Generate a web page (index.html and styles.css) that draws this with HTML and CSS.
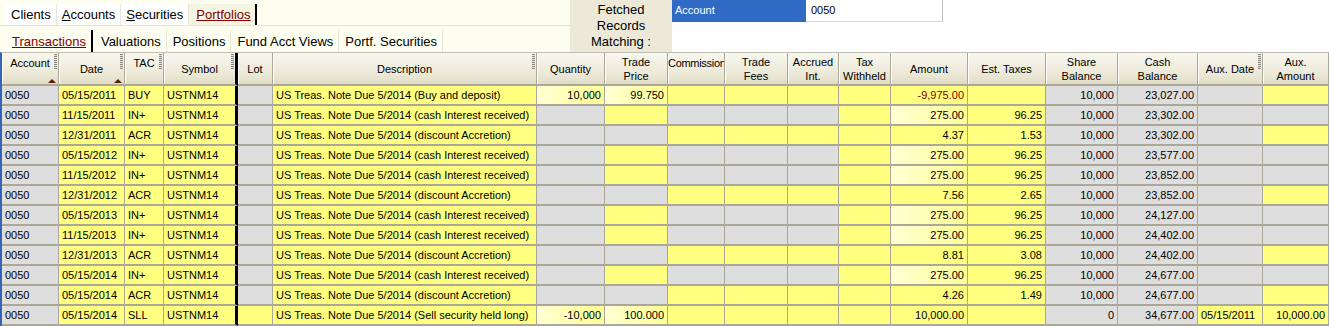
FILE: index.html
```
<!DOCTYPE html>
<html lang="en">

<head>
    <meta charset="UTF-8">
    <title>Portfolio Transactions</title>
    <link rel="stylesheet" href="styles.css">
</head>

<body>
    <div class="topbar">
        <div class="tab-panel">
            <div class="tab-row tab-row-main">
                <span class="tab">Clients</span>
                <span class="tab"><u>A</u>ccounts</span>
                <span class="tab"><u>S</u>ecurities</span>
                <span class="tab tab-active">Portfolios</span>
            </div>
            <div class="tab-row tab-row-sub">
                <span class="tab tab-active">Transactions</span>
                <span class="tab">Valuations</span>
                <span class="tab">Positions</span>
                <span class="tab">Fund Acct Views</span>
                <span class="tab">Portf. Securities</span>
            </div>
        </div>
        <div class="fetched">Fetched<br>Records<br>Matching :</div>
        <div class="filter">
            <div class="filter-row">
                <span class="filter-label">Account</span>
                <span class="filter-value">0050</span>
            </div>
        </div>
    </div>

    <div class="grid" id="grid">
        <div class="grid-row grid-head">
            <div class="hd hd-top">Account<span class="grip"></span><span class="sort"></span></div>
            <div class="hd">Date<span class="grip"></span><span class="sort"></span></div>
            <div class="hd hd-top">TAC<span class="grip"></span></div>
            <div class="hd hd-split">Symbol<span class="grip"></span></div>
            <div class="hd">Lot</div>
            <div class="hd">Description<span class="grip"></span></div>
            <div class="hd">Quantity</div>
            <div class="hd">Trade<br>Price</div>
            <div class="hd hd-top hd-left">Commission</div>
            <div class="hd">Trade<br>Fees</div>
            <div class="hd">Accrued<br>Int.</div>
            <div class="hd">Tax<br>Withheld</div>
            <div class="hd">Amount</div>
            <div class="hd">Est. Taxes</div>
            <div class="hd">Share<br>Balance</div>
            <div class="hd">Cash<br>Balance</div>
            <div class="hd">Aux. Date<span class="grip"></span></div>
            <div class="hd">Aux.<br>Amount</div>
        </div>
    </div>

    <script>
        // colour of lot, qty, price, comm, fees, accr, tax, amount, est, share, cash, aux date, aux amount
        const shades = {
            "BUY": "g ly ly y y y y y y g g g y",
            "IN+": "g g y g g g y ly y g g g g",
            "ACR": "g g g y y y y y y g g g y",
            "SLL": "y ly ly y y y y y y g g y y"
        };

        const rows = [
            ["05/15/2011", "BUY", "Buy and deposit", "10,000", "99.750", "-9,975.00", "", "10,000", "23,027.00", "", ""],
            ["11/15/2011", "IN+", "cash Interest received", "", "", "275.00", "96.25", "10,000", "23,302.00", "", ""],
            ["12/31/2011", "ACR", "discount Accretion", "", "", "4.37", "1.53", "10,000", "23,302.00", "", ""],
            ["05/15/2012", "IN+", "cash Interest received", "", "", "275.00", "96.25", "10,000", "23,577.00", "", ""],
            ["11/15/2012", "IN+", "cash Interest received", "", "", "275.00", "96.25", "10,000", "23,852.00", "", ""],
            ["12/31/2012", "ACR", "discount Accretion", "", "", "7.56", "2.65", "10,000", "23,852.00", "", ""],
            ["05/15/2013", "IN+", "cash Interest received", "", "", "275.00", "96.25", "10,000", "24,127.00", "", ""],
            ["11/15/2013", "IN+", "cash Interest received", "", "", "275.00", "96.25", "10,000", "24,402.00", "", ""],
            ["12/31/2013", "ACR", "discount Accretion", "", "", "8.81", "3.08", "10,000", "24,402.00", "", ""],
            ["05/15/2014", "IN+", "cash Interest received", "", "", "275.00", "96.25", "10,000", "24,677.00", "", ""],
            ["05/15/2014", "ACR", "discount Accretion", "", "", "4.26", "1.49", "10,000", "24,677.00", "", ""],
            ["05/15/2014", "SLL", "Sell security held long", "-10,000", "100.000", "10,000.00", "", "0", "34,677.00", "05/15/2011", "10,000.00"]
        ];

        const grid = document.getElementById("grid");

        function cell(row, text, cls) {
            const c = document.createElement("div");
            c.className = "cell " + cls;
            c.textContent = text;
            row.appendChild(c);
        }

        rows.forEach((r) => {
            const row = document.createElement("div");
            row.className = "grid-row";
            const s = shades[r[1]].split(" ");

            cell(row, "0050", "g");
            cell(row, r[0], "y");
            cell(row, r[1], "y");
            cell(row, "USTNM14", "y split");
            cell(row, "", s[0]);
            cell(row, "US Treas. Note Due 5/2014 (" + r[2] + ")", "y");
            cell(row, r[3], s[1] + " num");
            cell(row, r[4], s[2] + " num");
            cell(row, "", s[3]);
            cell(row, "", s[4]);
            cell(row, "", s[5]);
            cell(row, "", s[6]);
            cell(row, r[5], s[7] + " num" + (r[5].startsWith("-") ? " neg" : ""));
            cell(row, r[6], s[8] + " num");
            cell(row, r[7], s[9] + " num");
            cell(row, r[8], s[10] + " num");
            cell(row, r[9], s[11]);
            cell(row, r[10], s[12] + " num");

            grid.appendChild(row);
        });
    </script>
</body>

</html>
```

FILE: styles.css
```
* {
    box-sizing: border-box;
    margin: 0;
    padding: 0;
}

body {
    font-family: 'Liberation Sans', Arial, sans-serif;
    background-color: #ffffff;
    color: #000;
    width: 1329px;
    height: 327px;
    overflow: hidden;
}

/* top bar */
.topbar {
    display: flex;
    height: 52px;
}

.tab-panel {
    width: 570px;
    background-color: #fdfdf0;
    display: flex;
    flex-direction: column;
}

.tab-row {
    display: flex;
    align-items: stretch;
    font-size: 13px;
}

.tab-row-main {
    height: 26px;
    padding-top: 4px;
    padding-left: 6px;
    background-color: #fdfdf0;
    border-bottom: 1px solid #e6e4d2;
}

.tab-row-sub {
    height: 26px;
    padding-top: 4px;
    padding-left: 4px;
}

.tab {
    display: flex;
    align-items: center;
    padding: 0 5px;
    border-right: 1px solid #e8e6d6;
    background-color: #ffffff;
}

.tab-row-sub .tab {
    background-color: transparent;
    padding: 0 5px 0 6px;
}

.tab u {
    text-decoration: underline;
}

.tab-active {
    color: #800000;
    text-decoration: underline;
    border-right: 2px solid #000;
    background-color: #f6f4e2 !important;
}

.tab-row-main .tab-active {
    padding: 0 4px 0 7px;
}

.tab-row-sub .tab-active {
    background-color: transparent !important;
    padding: 0 5px 0 8px;
    margin-right: 2px;
}

.fetched {
    width: 102px;
    background-color: #ece9d8;
    font-size: 13px;
    line-height: 16px;
    text-align: center;
    padding-top: 2px;
}

.filter {
    width: 272px;
    background-color: #ffffff;
}

.filter-row {
    display: flex;
    height: 22px;
    font-size: 11px;
    line-height: 20px;
}

.filter-label {
    width: 134px;
    background-color: #316ac5;
    color: #fff;
    padding-left: 3px;
}

.filter-value {
    width: 137px;
    padding-left: 5px;
    border-right: 1px solid #c4c4c4;
    border-bottom: 1px solid #d8d8d8;
}

/* grid */
.grid {
    border-top: 1px solid #c0bfb4;
    border-left: 2px solid #3465b4;
    font-size: 11px;
}

.grid-row {
    display: grid;
    grid-template-columns: 57px 66px 39px 74px 35px 264px 68px 63px 57px 63px 51px 52px 77px 78px 72px 80px 65px 66px;
    height: 20px;
}

.grid-head {
    height: 33px;
}

.hd {
    position: relative;
    display: flex;
    align-items: center;
    justify-content: center;
    text-align: center;
    line-height: 14px;
    background: linear-gradient(#f8f7ef, #ebe8d6 70%, #e0dcc6);
    border-right: 1px solid #aca899;
    border-bottom: 2px solid #aca899;
    box-shadow: inset 1px 0 0 #ffffff;
}

.hd-top {
    align-items: flex-start;
    padding-top: 3px;
}

.hd-left {
    justify-content: flex-start;
    padding-left: 0;
    letter-spacing: -0.3px;
    white-space: nowrap;
    overflow: hidden;
}

.hd-split {
    border-right: 3px solid #000;
}

.grip {
    position: absolute;
    top: 1px;
    right: 1px;
    width: 3px;
    height: 15px;
    background-image: repeating-linear-gradient(#8c8a80 0 1px, #e4e2d6 1px 2px);
}

.sort {
    position: absolute;
    right: 2px;
    bottom: 1px;
    width: 0;
    height: 0;
    border-left: 4px solid transparent;
    border-right: 4px solid transparent;
    border-bottom: 4px solid #5a2000;
}

.cell {
    line-height: 18px;
    padding: 0 3px;
    white-space: nowrap;
    overflow: hidden;
    border-right: 1px solid #aca899;
    border-bottom: 2px solid #aca899;
}

.split {
    border-right: 3px solid #000;
}

.g {
    background-color: #dedede;
}

.y {
    background-color: #ffff80;
}

.ly {
    background: linear-gradient(to right, #ffffd4, #ffff96);
}

.num {
    text-align: right;
}

.neg {
    color: #800000;
}
```
